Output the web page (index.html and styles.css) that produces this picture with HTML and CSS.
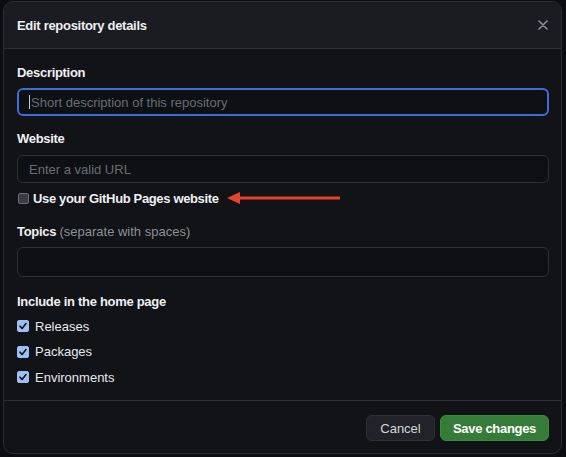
FILE: index.html
```html
<!DOCTYPE html>
<html lang="en">
<head>
<meta charset="utf-8">
<title>Edit repository details</title>
<link rel="stylesheet" href="styles.css">
</head>
<body>
<div class="dialog">
  <header class="dlg-header">
    <h1 class="dlg-title">Edit repository details</h1>
    <button class="close" aria-label="Close">
      <svg width="10" height="10" viewBox="0 0 10 10"><path d="M1 1L9 9M9 1L1 9" stroke="#8b8f96" stroke-width="1.6" stroke-linecap="round"/></svg>
    </button>
  </header>
  <div class="dlg-body">
    <label class="label l-desc">Description</label>
    <div class="input focus"><span class="caret"></span><span class="ph">Short description of this repository</span></div>

    <label class="label l-website">Website</label>
    <div class="input"><span class="ph">Enter a valid URL</span></div>

    <div class="check-row pages">
      <span class="box"></span>
      <span class="check-label">Use your GitHub Pages website</span>
      <svg class="arrow" width="114" height="14" viewBox="0 0 114 14"><path d="M0 7L13 1V5.5H113V8.5H13V13Z" fill="#e5432c"/></svg>
    </div>

    <label class="label l-topics">Topics <span class="note">(separate with spaces)</span></label>
    <div class="input"></div>

    <div class="label l-include">Include in the home page</div>
    <div class="check-list">
      <div class="check-row"><span class="box on"><svg width="10" height="10" viewBox="0 0 10 10"><path d="M2 5.2L4.1 7.4L8 2.6" fill="none" stroke="#0d1117" stroke-width="1.6" stroke-linecap="round" stroke-linejoin="round"/></svg></span><span class="item">Releases</span></div>
      <div class="check-row"><span class="box on"><svg width="10" height="10" viewBox="0 0 10 10"><path d="M2 5.2L4.1 7.4L8 2.6" fill="none" stroke="#0d1117" stroke-width="1.6" stroke-linecap="round" stroke-linejoin="round"/></svg></span><span class="item">Packages</span></div>
      <div class="check-row"><span class="box on"><svg width="10" height="10" viewBox="0 0 10 10"><path d="M2 5.2L4.1 7.4L8 2.6" fill="none" stroke="#0d1117" stroke-width="1.6" stroke-linecap="round" stroke-linejoin="round"/></svg></span><span class="item">Environments</span></div>
    </div>
  </div>
  <footer class="dlg-footer">
    <button class="btn cancel">Cancel</button>
    <button class="btn save">Save changes</button>
  </footer>
</div>
</body>
</html>
```

FILE: styles.css
```css
html, body {
  margin: 0;
  padding: 0;
  background: #0c0d10;
}
body {
  font-family: "Liberation Sans", Arial, sans-serif;
  font-size: 13px;
  color: #e6e8eb;
  padding: 1px 4px 0 3px;
}
.dialog {
  box-sizing: border-box;
  width: 559px;
  height: 453px;
  border: 1px solid #2c2e34;
  border-radius: 10px;
  background: #121317;
  overflow: hidden;
  display: flex;
  flex-direction: column;
}
.dlg-header {
  display: flex;
  align-items: center;
  justify-content: space-between;
  height: 46px;
  padding: 0 13px;
  background: #1b1c21;
  border-bottom: 1px solid #2c2e34;
}
.dlg-title {
  margin: 0;
  font-size: 13px;
  font-weight: bold;
  letter-spacing: -0.3px;
  color: #eef0f2;
}
.close {
  background: none;
  border: 0;
  padding: 0;
  margin-right: 0;
  display: flex;
}
.dlg-body {
  flex: 1;
  display: flex;
  flex-direction: column;
  padding: 15px 12px 0 13px;
}
.label {
  display: block;
  font-weight: bold;
  letter-spacing: -0.3px;
  line-height: 18px;
  color: #eef0f2;
}
.note {
  font-weight: normal;
  letter-spacing: 0;
  color: #8b9096;
}
.input {
  box-sizing: border-box;
  height: 28px;
  margin-top: 6px;
  border: 1px solid #2e3036;
  border-radius: 6px;
  background: #0f1013;
  display: flex;
  align-items: center;
  padding: 0 11px;
}
.input.focus {
  border: 2px solid #3a6fd8;
  padding: 0 10px;
}
.caret {
  width: 1px;
  height: 14px;
  background: #c9ccd0;
  margin-right: 1px;
}
.ph {
  color: #686d75;
}
.l-website { margin-top: 14px; }
.l-website + .input { margin-top: 7px; }
.check-row {
  display: flex;
  align-items: center;
  height: 18px;
}
.pages { margin-top: 6px; }
.box {
  box-sizing: border-box;
  width: 11px;
  height: 11px;
  margin-left: 1px;
  border: 1px solid #6b6e74;
  border-radius: 2px;
  background: #3a3c41;
  display: flex;
  align-items: center;
  justify-content: center;
}
.box.on {
  width: 12px;
  height: 12px;
  margin-left: 0;
  border: 1px solid #9dbff5;
  background: #9dbff5;
}
.check-label {
  margin-left: 4px;
  font-weight: bold;
  letter-spacing: -0.35px;
  color: #eef0f2;
}
.arrow {
  margin-left: 8px;
}
.l-topics { margin-top: 16px; }
.l-topics + .input { height: 30px; margin-top: 6px; }
.l-include { margin-top: 16px; }
.check-list {
  margin-top: 6px;
  display: flex;
  flex-direction: column;
  gap: 7.5px;
}
.item {
  margin-left: 6px;
  color: #e6e8eb;
}
.dlg-footer {
  height: 53px;
  flex: none;
  border-top: 1px solid #2c2e34;
  display: flex;
  justify-content: flex-end;
  align-items: flex-start;
  gap: 5px;
  padding: 14px 12px 0 0;
  box-sizing: border-box;
}
.btn {
  box-sizing: border-box;
  height: 26px;
  border-radius: 6px;
  font-family: inherit;
  font-size: 13px;
  padding: 0;
  white-space: nowrap;
}
.cancel {
  width: 69px;
  background: #212328;
  border: 1px solid #2e3036;
  color: #d3d6da;
  font-weight: normal;
}
.save {
  width: 109px;
  background: #367c39;
  border: 1px solid #3c8a40;
  color: #ffffff;
  font-weight: bold;
  letter-spacing: -0.3px;
}
```
